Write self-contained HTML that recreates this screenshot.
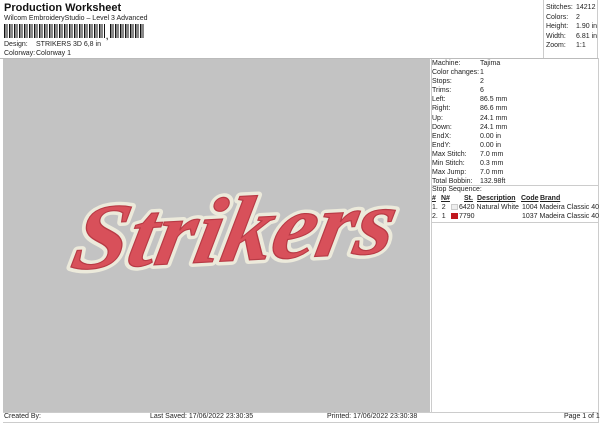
<!DOCTYPE html>
<html><head><meta charset="utf-8"><style>
*{margin:0;padding:0;box-sizing:border-box}
body{width:600px;height:424px;background:#fff;font-family:"Liberation Sans",sans-serif;color:#222;position:relative;overflow:hidden;font-size:7px}
.a{position:absolute;white-space:nowrap}
</style></head><body>
<div class="a" style="left:4px;top:2px;font-size:11px;font-weight:bold;color:#111">Production Worksheet</div>
<div class="a" style="left:4px;top:15px;font-size:7px">Wilcom EmbroideryStudio – Level 3 Advanced</div>
<div class="a" style="left:4px;top:24px;width:101px;height:14px;background:repeating-linear-gradient(90deg,#111 0 1.5px,#fff 1.5px 2.5px,#111 2.5px 3.5px,#fff 3.5px 5px)"></div>
<div class="a" style="left:106px;top:32px;font-size:8px;font-weight:bold">,</div>
<div class="a" style="left:110px;top:24px;width:35px;height:14px;background:repeating-linear-gradient(90deg,#111 0 1.5px,#fff 1.5px 2.5px,#111 2.5px 3.5px,#fff 3.5px 5px)"></div>
<div class="a" style="left:4px;top:41px">Design:</div><div class="a" style="left:36px;top:41px">STRIKERS 3D 6,8 in</div>
<div class="a" style="left:4px;top:50px">Colorway:</div><div class="a" style="left:36px;top:50px">Colorway 1</div>
<div class="a" style="left:543px;top:0;width:55px;height:58px;border-left:1px solid #ccc;border-right:1px solid #ccc"></div>
<div class="a" style="left:546px;top:3px;line-height:9.5px">Stitches:<br>Colors:<br>Height:<br>Width:<br>Zoom:</div>
<div class="a" style="left:576px;top:3px;line-height:9.5px">14212<br>2<br>1.90 in<br>6.81 in<br>1:1</div>
<div class="a" style="left:0;top:58px;width:599px;height:1px;background:#bbb"></div>
<div class="a" style="left:3px;top:59px;width:427px;height:353px;background:#c3c3c3"></div>
<div class="a" style="left:598px;top:58px;width:1px;height:365px;background:#ccc"></div>
<div class="a" style="left:431px;top:59px;width:1px;height:353px;background:#ccc"></div>
<svg class="a" style="left:3px;top:59px" width="427" height="353">
<g transform="rotate(-3 225 175) translate(64,202) skewX(-14) scale(1,1.15)">
<text x="0" y="0" font-family="Liberation Serif,serif" font-style="italic" font-weight="bold" font-size="80" textLength="322" lengthAdjust="spacingAndGlyphs" fill="#d8505a" stroke="#eceadb" stroke-width="7" paint-order="stroke" stroke-linejoin="round">Strikers</text>
<text x="0" y="0" font-family="Liberation Serif,serif" font-style="italic" font-weight="bold" font-size="80" textLength="322" lengthAdjust="spacingAndGlyphs" fill="#d8505a" stroke="#b83a45" stroke-width="1">Strikers</text>
</g>
</svg>
<div class="a" style="left:432px;top:59px;line-height:9.1px">Machine:<br>Color changes:<br>Stops:<br>Trims:<br>Left:<br>Right:<br>Up:<br>Down:<br>EndX:<br>EndY:<br>Max Stitch:<br>Min Stitch:<br>Max Jump:<br>Total Bobbin:</div>
<div class="a" style="left:480px;top:59px;line-height:9.1px">Tajima<br>1<br>2<br>6<br>86.5 mm<br>86.6 mm<br>24.1 mm<br>24.1 mm<br>0.00 in<br>0.00 in<br>7.0 mm<br>0.3 mm<br>7.0 mm<br>132.98ft</div>
<div class="a" style="left:431px;top:185px;width:168px;height:1px;background:#ccc"></div>
<div class="a" style="left:432px;top:186px">Stop Sequence:</div>
<div class="a" style="left:432px;top:195px;font-weight:bold;text-decoration:underline">#</div>
<div class="a" style="left:441px;top:195px;font-weight:bold;text-decoration:underline">N#</div>
<div class="a" style="left:464px;top:195px;font-weight:bold;text-decoration:underline">St.</div>
<div class="a" style="left:477px;top:195px;font-weight:bold;text-decoration:underline">Description</div>
<div class="a" style="left:521px;top:195px;font-weight:bold;text-decoration:underline">Code</div>
<div class="a" style="left:540px;top:195px;font-weight:bold;text-decoration:underline">Brand</div>
<div class="a" style="left:432px;top:204px">1.&nbsp; 2</div>
<div class="a" style="left:451px;top:204px;width:7px;height:6px;background:#eee;border:1px solid #ccc"></div>
<div class="a" style="left:459px;top:204px">6420 Natural White</div>
<div class="a" style="left:522px;top:204px">1004 Madeira Classic 40</div>
<div class="a" style="left:432px;top:213px">2.&nbsp; 1</div>
<div class="a" style="left:451px;top:213px;width:7px;height:6px;background:#c0181f"></div>
<div class="a" style="left:459px;top:213px">7790</div>
<div class="a" style="left:522px;top:213px">1037 Madeira Classic 40</div>
<div class="a" style="left:431px;top:222px;width:168px;height:1px;background:#ccc"></div>
<div class="a" style="left:3px;top:412px;width:596px;height:1px;background:#ccc"></div>
<div class="a" style="left:3px;top:422px;width:596px;height:1px;background:#ccc"></div>
<div class="a" style="left:4px;top:413px">Created By:</div>
<div class="a" style="left:150px;top:413px">Last Saved: 17/06/2022 23:30:35</div>
<div class="a" style="left:327px;top:413px">Printed: 17/06/2022 23:30:38</div>
<div class="a" style="left:564px;top:413px">Page 1 of 1</div>
</body></html>
